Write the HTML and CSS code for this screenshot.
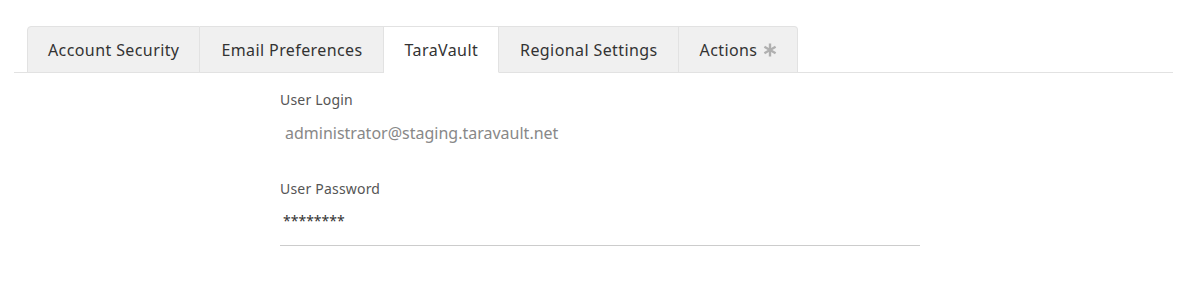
FILE: index.html
```html
<!DOCTYPE html>
<html>
<head>
<meta charset="utf-8">
<link rel="stylesheet" href="styles.css">
</head>
<body>
<div class="page">
  <ul class="tabs">
    <li class="tab">Account Security</li>
    <li class="tab">Email Preferences</li>
    <li class="tab active">TaraVault</li>
    <li class="tab">Regional Settings</li>
    <li class="tab">Actions <svg class="ast" viewBox="0 0 14 14" width="14" height="14"><g stroke="#b0b0b0" stroke-width="2.4" stroke-linecap="butt"><line x1="7" y1="0.5" x2="7" y2="13.5"/><line x1="1.4" y1="3.75" x2="12.6" y2="10.25"/><line x1="1.4" y1="10.25" x2="12.6" y2="3.75"/></g></svg></li>
  </ul>
  <div class="panel">
    <div class="form">
      <div class="field">
        <div class="label">User Login</div>
        <div class="value login">administrator@staging.taravault.net</div>
      </div>
      <div class="field">
        <div class="label">User Password</div>
        <div class="value pwd">********</div>
      </div>
    </div>
  </div>
</div>
</body>
</html>
```
FILE: styles.css
```css
* { box-sizing: border-box; }
html, body { margin: 0; padding: 0; background: #fff; }
body { font-family: "Noto Sans", "Open Sans", sans-serif; color: #333; }
.page { padding: 26px 28px 0 14px; }
.tabs {
  list-style: none; margin: 0; padding: 0 0 0 13px;
  display: flex; border-bottom: 1px solid #e2e2e2;
}
.tab {
  height: 47px; margin-bottom: -1px;
  padding: 0 20px 0 21px; display: flex; align-items: center;
  font-size: 16px; color: #333; background: #f0f0f0;
  border: 1px solid #e2e2e2; border-left: none;
  letter-spacing: 0.4px;
}
.tab:first-child { border-left: 1px solid #e2e2e2; border-top-left-radius: 4px; padding-left: 20px; }
.tab:last-child { border-top-right-radius: 4px; }
.tab.active { background: #fff; border-bottom-color: #fff; }
.ast { margin-left: 6px; }
.panel { padding-left: 266px; }
.form { width: 640px; }
.field { display: flex; flex-direction: column; }
.label { font-size: 14px; color: #555; margin-top: 17px; line-height: 20px; letter-spacing: 0.2px; }
.value { font-size: 16px; }
.login { color: #888; padding-left: 5px; margin-top: 11px; margin-bottom: 14px; line-height: 24px; }
.field:nth-child(2) .label { margin-top: 20px; }
.pwd { color: #333; padding: 12px 0 14px 3px; font-size: 14px; border-bottom: 1px solid #ccc; line-height: 20px; }
```
